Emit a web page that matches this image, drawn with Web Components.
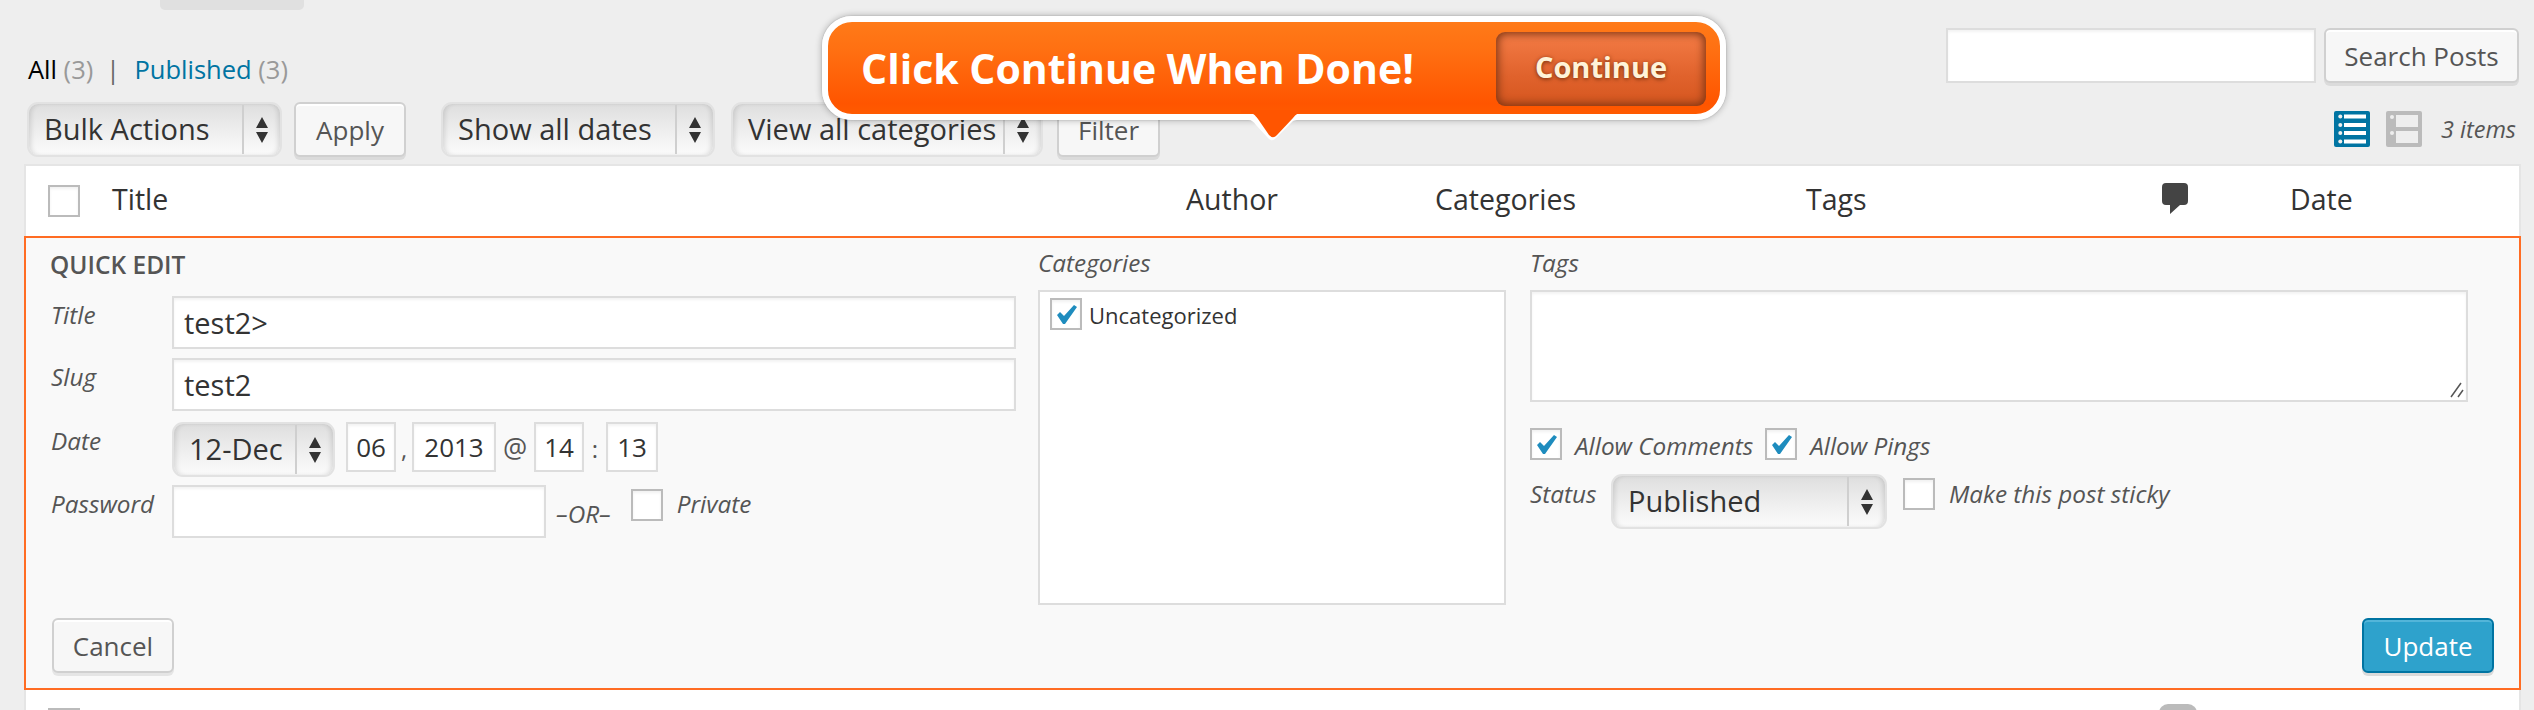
<!DOCTYPE html>
<html>
<head>
<meta charset="utf-8">
<title>Posts</title>
<style>
html, body {
    margin: 0;
    padding: 0;
    background: #eeeeee;
    overflow: hidden;
}
</style>
</head>
<body>
<posts-page></posts-page>
<script>
function makeTemplate(html) {
  const template = document.createElement("template");
  template.innerHTML = html;
  return template;
}

class WpElement extends HTMLElement {
  constructor() {
    super();
    const shadow = this.attachShadow({ mode: "open" });
    shadow.append(this.constructor.template.content.cloneNode(true));
  }
}

class WpButton extends WpElement {
  static template = makeTemplate(`
<style>
:host {
    display: inline-flex;
    box-sizing: border-box;
    height: 58px;
    padding-bottom: 3px;
    flex: none;
}
.btn {
    box-sizing: border-box;
    width: 100%;
    height: 55px;
    display: flex;
    align-items: center;
    justify-content: center;
    border: 2px solid #d0d0d0;
    border-radius: 6px;
    background: #f7f7f7;
    box-shadow: inset 0 2px 0 #fff, 0 3px 0 rgba(0,0,0,.08);
    color: #555;
    font: 26px/1 "Open Sans", sans-serif;
}
:host([primary]) .btn {
    background: #2ea2cc;
    border-color: #0074a2;
    box-shadow: inset 0 2px 0 rgba(120,200,230,.5), 0 3px 0 rgba(0,0,0,.12);
    color: #fff;
}
</style>
<div class="btn"><slot></slot></div>
`);
}

class WpSelect extends WpElement {
  static template = makeTemplate(`
<style>
:host {
    display: inline-flex;
    box-sizing: border-box;
    height: 55px;
    flex: none;
    border: 2px solid #e2e2e2;
    border-radius: 11px;
    background: linear-gradient(#dedede, #ececec 45%, #fbfbfb);
    box-shadow: inset 4px 0 5px -2px rgba(0,0,0,.12), inset -4px 0 5px -2px rgba(0,0,0,.12);
    color: #333;
    font: 29px/1 "Open Sans", sans-serif;
}
.label {
    flex: 1;
    display: flex;
    align-items: center;
    padding: 0 0 2px 15px;
    white-space: nowrap;
    overflow: hidden;
}
.arrows {
    flex: none;
    width: 36px;
    margin: 1px 0;
    border-left: 2px solid #cfcfcf;
    display: flex;
    align-items: center;
    justify-content: center;
}
</style>
<div class="label"><slot></slot></div>
<div class="arrows">
  <svg width="14" height="26" viewBox="0 0 14 26"><path d="M7 0l6 11H1zM1 15h12L7 26z" fill="#333"/></svg>
</div>
`);
}

class WpInput extends WpElement {
  static template = makeTemplate(`
<style>
:host {
    display: flex;
    align-items: center;
    box-sizing: border-box;
    flex: none;
    height: 53px;
    border: 2px solid #dddddd;
    background: #fff;
    box-shadow: inset 0 2px 3px rgba(0,0,0,.05);
    padding: 0 10px;
    color: #333;
    font: 29px/1 "Open Sans", sans-serif;
    white-space: nowrap;
}
</style>
<slot></slot>
`);
}

class WpCheck extends WpElement {
  static template = makeTemplate(`
<style>
:host {
    display: block;
    box-sizing: border-box;
    flex: none;
    width: 32px;
    height: 32px;
    border: 2px solid #bbbbbb;
    background: #fff;
    box-shadow: inset 0 2px 3px rgba(0,0,0,.06);
}
svg { display: none; }
:host([checked]) svg { display: block; margin: -2px; }
</style>
<svg width="32" height="32" viewBox="0 0 32 32"><path d="M7 17l3-3 4 4 10-11 3 2-12 17h-2z" fill="#1e8cbe"/></svg>
`);
}

class WpTooltip extends WpElement {
  static template = makeTemplate(`
<style>
:host {
    display: block;
    position: absolute;
    left: 822px;
    top: 16px;
    width: 904px;
    height: 104px;
    font-family: "Open Sans", sans-serif;
}
.box {
    box-sizing: border-box;
    height: 100%;
    display: flex;
    align-items: center;
    justify-content: space-between;
    border: 6px solid #fff;
    border-radius: 30px;
    background: linear-gradient(#ff7a18, #ff7012 30%, #ff5500 88%, #ff5a00);
    box-shadow: 0 0 7px rgba(0,0,0,.3), 0 0 0 1px rgba(0,0,0,.04);
    padding: 2px 14px 0 33px;
}
.msg {
    color: #fff;
    font-size: 41px;
    font-weight: 700;
    white-space: nowrap;
    padding-bottom: 3px;
}
.go {
    box-sizing: border-box;
    width: 210px;
    height: 74px;
    display: flex;
    align-items: center;
    justify-content: center;
    border-radius: 9px;
    background: linear-gradient(#f47c46, #e0622c 60%, #d5561f);
    box-shadow: inset 0 0 8px 2px #7d3512;
    color: #fff3d8;
    font-size: 29px;
    font-weight: 700;
    text-shadow: 0 1px 4px #6d2c0c;
    padding-bottom: 5px;
}
.tail {
    position: absolute;
    left: 418px;
    top: 94px;
}
</style>
<div class="box">
  <div class="msg"><slot></slot></div>
  <div class="go">Continue</div>
</div>
<svg class="tail" width="70" height="32" viewBox="0 0 70 32">
  <path d="M8 10C12 10 14 12 16 15L28 28C31 31 33 31 36 28L52 12C54 10 56 10 63 10Z" fill="#fff"/>
  <path d="M1 0H70V3H62C58 3 56 4 53 8L37 25C34 28 32 28 29 25L18 9C15 5 13 3 9 3H1Z" fill="#ff5500"/>
</svg>
`);
}

class PostsHeader extends WpElement {
  static template = makeTemplate(`
<style>
:host {
    display: flex;
    height: 10px;
    overflow: hidden;
    padding-left: 28px;
    font-family: "Open Sans", sans-serif;
}
h2 {
    margin: -48px 0 0;
    width: 132px;
    flex: none;
    font-size: 46px;
    line-height: 60px;
    font-weight: 300;
    color: #333;
}
.add {
    width: 144px;
    height: 10px;
    flex: none;
    background: #e0e0e0;
    border-radius: 0 0 5px 5px;
}
</style>
<h2>Posts</h2>
<div class="add"></div>
`);
}

class PostsViews extends WpElement {
  static template = makeTemplate(`
<style>
:host {
    display: flex;
    justify-content: space-between;
    height: 92px;
    padding: 0 15px 0 28px;
    font: 25.500px/1 "Open Sans", sans-serif;
    color: #999;
}
.links {
    padding-top: 47px;
    white-space: nowrap;
}
b { font-weight: 400; color: #000; }
a { color: #0074a2; text-decoration: none; }
.sep { color: #666; margin: 0 8px 0 6px; }
.search {
    display: flex;
    gap: 8px;
    padding-top: 18px;
}
.search wp-input { width: 370px; height: 55px; }
.search wp-button { width: 195px; }
</style>
<div class="links"><b>All</b> (3) <span class="sep">|</span> <a>Published</a> (3)</div>
<div class="search">
  <wp-input></wp-input>
  <wp-button>Search Posts</wp-button>
</div>
`);
}

class PostsToolbar extends WpElement {
  static template = makeTemplate(`
<style>
:host {
    display: flex;
    align-items: flex-start;
    height: 62px;
    padding: 0 18px 0 27px;
    font-family: "Open Sans", sans-serif;
}
.bulk { width: 255px; margin-right: 12px; }
.apply { width: 112px; margin-right: 35px; }
.dates { width: 274px; margin-right: 16px; }
.cats { width: 312px; margin-right: 14px; }
.filter { width: 103px; }
.pages {
    margin-left: auto;
    display: flex;
    align-items: center;
    height: 42px;
    padding-top: 6px;
}
.pages svg { display: block; }
.pages .excerpt { margin-left: 16px; }
.count {
    margin-left: 19px;
    font-size: 23.500px;
    font-style: italic;
    color: #555;
    white-space: nowrap;
}
</style>
<wp-select class="bulk">Bulk Actions</wp-select>
<wp-button class="apply">Apply</wp-button>
<wp-select class="dates">Show all dates</wp-select>
<wp-select class="cats">View all categories</wp-select>
<wp-button class="filter">Filter</wp-button>
<div class="pages">
  <svg width="36" height="36" viewBox="0 0 36 36">
    <rect width="36" height="36" rx="2" fill="#0074a2"/>
    <path d="M10 3.5h22v4H10zM10 12h22v4H10zM10 20h22v4H10zM10 28.500h22v4H10z" fill="#fff"/>
    <circle cx="6.300" cy="5.500" r="2" fill="#eee"/><circle cx="6.300" cy="14" r="2" fill="#eee"/>
    <circle cx="6.300" cy="22" r="2" fill="#eee"/><circle cx="6.300" cy="30.500" r="2" fill="#eee"/>
  </svg>
  <svg class="excerpt" width="36" height="36" viewBox="0 0 36 36">
    <rect width="36" height="36" rx="2" fill="#bbb"/>
    <path d="M10 4h22v12H10zM10 20h22v12H10z" fill="#eee"/>
    <circle cx="6" cy="6" r="2" fill="#eee"/><circle cx="6" cy="22" r="2" fill="#eee"/>
  </svg>
  <span class="count">3 items</span>
</div>
`);
}

class TableHead extends WpElement {
  static template = makeTemplate(`
<style>
:host {
    display: grid;
    grid-template-columns: 64px 1074px 249px 371px 356px 128px 1fr;
    align-items: center;
    height: 70px;
    padding-left: 22px;
    color: #333;
    font: 28.500px/1 "Open Sans", sans-serif;
}
span { padding-bottom: 3px; }
.bubble { display: block; margin-bottom: 4px; }
</style>
<wp-check></wp-check>
<span>Title</span>
<span>Author</span>
<span>Categories</span>
<span>Tags</span>
<svg class="bubble" width="26" height="32" viewBox="0 0 26 32">
  <path d="M4 0h18a4 4 0 0 1 4 4v14a4 4 0 0 1-4 4H18L8 31V22H4a4 4 0 0 1-4-4V4a4 4 0 0 1 4-4z" fill="#444"/>
</svg>
<span>Date</span>
`);
}

class QuickEdit extends WpElement {
  static template = makeTemplate(`
<style>
:host {
    display: block;
    box-sizing: border-box;
    height: 454px;
    margin: 0 -2px;
    border: solid #ff6c23;
    border-width: 2px;
    background: #f9f9f9;
    color: #333;
    font: 26px/1 "Open Sans", sans-serif;
}
.fields {
    display: grid;
    grid-template-columns: 966px 468px 940px;
    column-gap: 22px;
    height: 380px;
    padding-left: 24px;
}
.fields > div { min-width: 0; }
.fields > div:last-child { margin-left: 2px; }
.caption {
    height: 58px;
    padding-top: 15px;
    box-sizing: border-box;
    font-size: 24.500px;
    font-weight: 600;
    color: #555;
    text-transform: uppercase;
}
.row {
    display: flex;
    align-items: flex-start;
}
.row.slug { margin-top: 9px; }
.row.date { margin-top: 11px; }
.row.pass { margin-top: 8px; }
.tag {
    font-size: 24.300px;
    font-style: italic;
    color: #555;
    white-space: nowrap;
}
.row > .tag:first-child { width: 122px; flex: none; padding: 7px 0 0 1px; box-sizing: border-box; }
.row wp-input.wide { flex: 1; }
.row.date wp-input { height: 50px; justify-content: center; padding: 0; font-size: 26px; }
.month { width: 163px; margin-right: 11px; }
.dd { width: 50px; }
.yy { width: 84px; }
.hh { width: 50px; }
.mn { width: 52px; }
.punct { width: 16px; text-align: center; flex: none; color: #555; font-size: 24px; padding-top: 15px; }
.at { width: 38px; font-size: 27px; padding-top: 12px; }
.colon { width: 22px; }
.pw { width: 374px; }
.or { margin: 17px 20px 0 10px; }
.private { margin: 4px 14px 0 0; }
.priv-label { padding-top: 7px; }
.head { height: 52px; padding-top: 13px; box-sizing: border-box; display: block; }
.cats {
    box-sizing: border-box;
    height: 315px;
    border: 2px solid #dddddd;
    background: #fff;
    display: flex;
    align-items: flex-start;
    gap: 7px;
    padding: 6px 0 0 10px;
}
.cat-name { font-size: 22px; color: #333; padding-top: 6px; white-space: nowrap; }
.area {
    box-sizing: border-box;
    position: relative;
    height: 112px;
    border: 2px solid #dddddd;
    background: #fff;
    box-shadow: inset 0 2px 3px rgba(0,0,0,.05);
}
.grip { position: absolute; right: 2px; bottom: 2px; }
.allow {
    display: flex;
    align-items: flex-start;
    margin-top: 26px;
}
.allow .tag { padding: 6px 12px 0 13px; }
.status {
    display: flex;
    align-items: flex-start;
    margin-top: 14px;
}
.status .tag { padding-top: 8px; width: 81px; flex: none; }
.status wp-select { width: 276px; margin-right: 16px; }
.sticky { margin-top: 4px; }
.status .tag.last { padding: 8px 0 0 14px; width: auto; }
.actions {
    display: flex;
    justify-content: space-between;
    padding: 0 25px 0 26px;
}
.actions .cancel { width: 122px; }
.actions .update { width: 132px; }
</style>
<div class="fields">
  <div>
    <div class="caption">Quick Edit</div>
    <div class="row"><span class="tag">Title</span><wp-input class="wide">test2&gt;</wp-input></div>
    <div class="row slug"><span class="tag">Slug</span><wp-input class="wide">test2</wp-input></div>
    <div class="row date">
      <span class="tag">Date</span>
      <wp-select class="month">12-Dec</wp-select>
      <wp-input class="dd">06</wp-input>
      <span class="punct">,</span>
      <wp-input class="yy">2013</wp-input>
      <span class="punct at">@</span>
      <wp-input class="hh">14</wp-input>
      <span class="punct colon">:</span>
      <wp-input class="mn">13</wp-input>
    </div>
    <div class="row pass">
      <span class="tag">Password</span>
      <wp-input class="pw"></wp-input>
      <span class="tag or">–OR–</span>
      <wp-check class="private"></wp-check>
      <span class="tag priv-label">Private</span>
    </div>
  </div>
  <div>
    <span class="tag head">Categories</span>
    <div class="cats"><wp-check checked></wp-check><span class="cat-name">Uncategorized</span></div>
  </div>
  <div>
    <span class="tag head">Tags</span>
    <div class="area">
      <svg class="grip" width="14" height="16" viewBox="0 0 14 16"><path d="M1 15L11 1M8 15L13 8" stroke="#555" stroke-width="1.500" fill="none"/></svg>
    </div>
    <div class="allow">
      <wp-check checked></wp-check><span class="tag">Allow Comments</span>
      <wp-check checked></wp-check><span class="tag">Allow Pings</span>
    </div>
    <div class="status">
      <span class="tag">Status</span>
      <wp-select>Published</wp-select>
      <wp-check class="sticky"></wp-check>
      <span class="tag last">Make this post sticky</span>
    </div>
  </div>
</div>
<div class="actions">
  <wp-button class="cancel">Cancel</wp-button>
  <wp-button class="update" primary>Update</wp-button>
</div>
`);
}

class PostsTable extends WpElement {
  static template = makeTemplate(`
<style>
:host {
    display: block;
    box-sizing: border-box;
    width: 2497px;
    margin-left: 24px;
    border: solid #e5e5e5;
    border-width: 2px 2px 0;
    background: #fff;
    height: 546px;
}
.next {
    display: grid;
    grid-template-columns: 2111px 38px;
    padding: 14px 0 0 22px;
}
.next .box {
    width: 32px;
    height: 32px;
    margin-top: 4px;
    border: 2px solid #bbb;
    box-sizing: border-box;
}
.next .bubble {
    height: 30px;
    border-radius: 9px;
    background: #bbb;
}
</style>
<table-head></table-head>
<quick-edit></quick-edit>
<div class="next"><div class="box"></div><div class="bubble"></div></div>
`);
}

class PostsPage extends WpElement {
  static template = makeTemplate(`
<style>
:host {
    display: block;
    position: relative;
    width: 2534px;
    height: 710px;
    overflow: hidden;
    background: #eeeeee;
}
</style>
<posts-header></posts-header>
<posts-views></posts-views>
<posts-toolbar></posts-toolbar>
<posts-table></posts-table>
<wp-tooltip>Click Continue When Done!</wp-tooltip>
`);
}

customElements.define("wp-button", WpButton);
customElements.define("wp-select", WpSelect);
customElements.define("wp-input", WpInput);
customElements.define("wp-check", WpCheck);
customElements.define("wp-tooltip", WpTooltip);
customElements.define("posts-header", PostsHeader);
customElements.define("posts-views", PostsViews);
customElements.define("posts-toolbar", PostsToolbar);
customElements.define("table-head", TableHead);
customElements.define("quick-edit", QuickEdit);
customElements.define("posts-table", PostsTable);
customElements.define("posts-page", PostsPage);
</script>
</body>
</html>
